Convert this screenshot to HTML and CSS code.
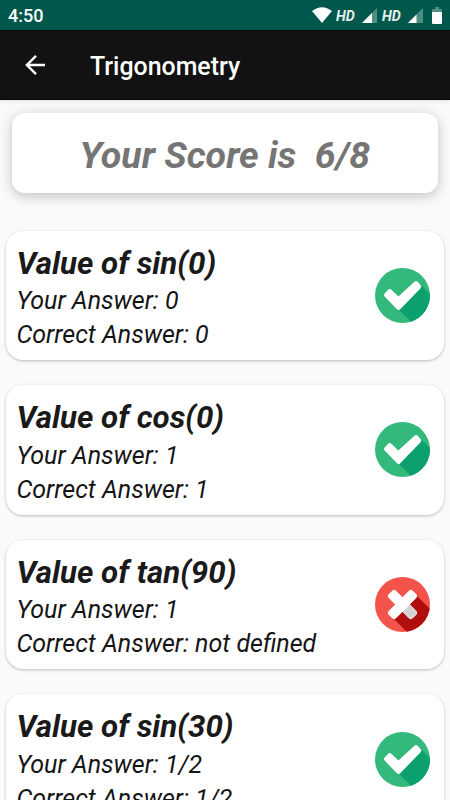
FILE: index.html
```html
<!DOCTYPE html>
<html lang="en">
<head>
<meta charset="utf-8">
<title>Trigonometry</title>
<link rel="stylesheet" href="styles.css">
</head>
<body>
<svg class="defs" aria-hidden="true">
  <defs>
    <clipPath id="disc"><circle cx="27.5" cy="27.5" r="27.5"/></clipPath>
    <symbol id="right" viewBox="0 0 55 55">
      <circle cx="27.5" cy="27.5" r="27.5" fill="#33b97c"/>
      <path d="M23 41L45 16L60 31L48 60L40 58Z" fill="#0ba06e" clip-path="url(#disc)"/>
      <path d="M11.3 27L14.8 23.4L23.3 31.6L41 15.4L43.9 18.6L23.6 39.6Z" fill="#fff" stroke="#fff" stroke-width="4.6" stroke-linejoin="round"/>
    </symbol>
    <symbol id="wrong" viewBox="0 0 55 55">
      <circle cx="27.5" cy="27.5" r="27.5" fill="#f3534a"/>
      <path d="M18 41L41 18L60 37L55 60L37 60Z" fill="#b00d0d" clip-path="url(#disc)"/>
      <rect x="-17" y="-5.2" width="34" height="10.4" rx="3" fill="#fff" transform="translate(27.5 27.5) rotate(45)"/>
      <path d="M27.5 34.8L34.9 27.5L40.9 33.5Q42.7 35.4 40.9 37.3L37.3 40.9Q35.4 42.7 33.5 40.9Z" fill="#d3d3d3"/>
      <rect x="-17" y="-5.2" width="34" height="10.4" rx="3" fill="#fff" transform="translate(27.5 27.5) rotate(-45)"/>
    </symbol>
    <symbol id="signal" viewBox="0 0 15 15">
      <path d="M0 15L15 0V15Z" fill="#4e8f82"/>
    </symbol>
  </defs>
</svg>
<div class="status">
  <span class="time">4:50</span>
  <svg class="wifi" viewBox="0 0 20 16"><path d="M0 4Q10 -3.6 20 4L10 16Z" fill="#fff"/></svg>
  <span class="hd">HD</span>
  <svg class="signal" viewBox="0 0 15 15"><use href="#signal"/><path d="M0 15L10 5V15Z" fill="#fff"/></svg>
  <span class="hd">HD</span>
  <svg class="signal" viewBox="0 0 15 15"><use href="#signal"/><path d="M0 15L8.5 6.5V15Z" fill="#fff"/></svg>
  <svg class="battery" viewBox="0 0 10 17"><path d="M3 0H7V2H10V5H0V2H3Z" fill="#4e8f82"/><path d="M0 5H10V16Q10 17 9 17H1Q0 17 0 16Z" fill="#fff"/></svg>
</div>
<header class="appbar">
  <svg class="back" viewBox="0 0 20 20"><path d="M20 10H2M11 .9L1.9 10L11 19.1" fill="none" stroke="#fff" stroke-width="2.4"/></svg>
  <h1>Trigonometry</h1>
</header>
<main>
  <div class="score">Your Score is&nbsp; 6/8</div>
  <section class="list">
    <article class="card"><div><h2>Value of sin(0)</h2><p>Your Answer: 0</p><p>Correct Answer: 0</p></div><svg class="mark"><use href="#right"/></svg></article>
    <article class="card"><div><h2>Value of cos(0)</h2><p>Your Answer: 1</p><p>Correct Answer: 1</p></div><svg class="mark"><use href="#right"/></svg></article>
    <article class="card"><div><h2>Value of tan(90)</h2><p>Your Answer: 1</p><p>Correct Answer: not defined</p></div><svg class="mark"><use href="#wrong"/></svg></article>
    <article class="card"><div><h2>Value of sin(30)</h2><p>Your Answer: 1/2</p><p>Correct Answer: 1/2</p></div><svg class="mark"><use href="#right"/></svg></article>
  </section>
</main>
</body>
</html>
```
FILE: styles.css
```css
* { box-sizing: border-box; margin: 0; padding: 0; }
html, body { height: 800px; overflow: hidden; }
body { width: 450px; background: #fafafa; font-family: Roboto, sans-serif; display: flex; flex-direction: column; }
svg { display: block; flex: none; }
.defs { width: 0; height: 0; }
.status { flex: none; height: 30px; background: #00574b; display: flex; align-items: center; padding: 0 8px; color: #fff; }
.time { font-size: 18px; font-weight: 500; line-height: 30px; margin-right: auto; padding-top: 1px; }
.wifi { width: 20px; height: 16px; margin-right: -1px; }
.hd { font-size: 14.3px; font-weight: 700; font-style: italic; line-height: 30px; width: 20px; color: #e3efed; padding-top: 2px; margin-left: 5px; }
.signal { width: 15px; height: 15px; margin-left: 6px; margin-top: 1px; }
.signal + .hd { margin-left: 5px; }
.battery { width: 10px; height: 17px; margin-left: 9px; }
.appbar { flex: none; height: 70px; background: #121212; border-top: 1px solid #080808; border-bottom: 1px solid #060606; display: flex; align-items: center; padding-left: 25px; box-shadow: 0 1px 4px rgba(0,0,0,.1); }
.back { width: 20px; height: 20px; }
h1 { margin-left: 45px; font-size: 24.9px; font-weight: 500; color: #fff; line-height: 30px; padding-top: 3px; }
main { flex: 1; min-height: 0; overflow: hidden; }
.score { margin: 12.5px 12.5px 0 12px; height: 80.5px; border-radius: 13px; background: #fff; box-shadow: 0 4px 12px rgba(0,0,0,.16), 0 0 16px rgba(0,0,0,.08); color: #757575; font-size: 37.5px; font-weight: 700; font-style: italic; line-height: 84px; text-align: center; white-space: pre; }
.list { padding: 37.5px 6px 0; display: flex; flex-direction: column; gap: 25px; }
.card { flex: none; height: 129.6px; border-radius: 17px; background: #fff; box-shadow: 0 1px 3px rgba(0,0,0,.25); display: flex; justify-content: space-between; align-items: flex-start; padding: 14px 14px 0 10.5px; font-style: italic; color: #111; }
h2 { font-size: 31.3px; font-weight: 700; line-height: 37px; margin-bottom: 2.7px; color: #1a1a1a; }
p { font-size: 25px; font-weight: 400; line-height: 34px; white-space: nowrap; color: #151515; }
.mark { width: 55px; height: 55px; margin-top: 23.4px; }
```
